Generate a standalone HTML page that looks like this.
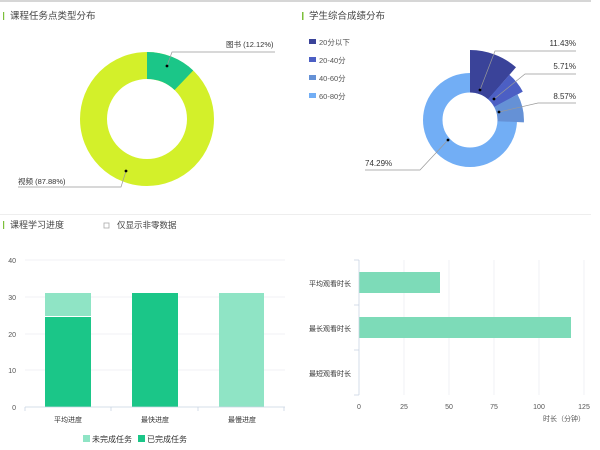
<!DOCTYPE html>
<html><head><meta charset="utf-8"><style>
html,body{margin:0;padding:0;background:#fff;width:600px;height:450px;overflow:hidden}
text{font-family:"Liberation Sans","Noto Sans CJK SC",sans-serif}
</style></head><body>
<svg width="600" height="450" viewBox="0 0 600 450" xmlns="http://www.w3.org/2000/svg">
<rect x="0" y="0" width="591" height="2" fill="#d6d6d6"/>
<rect x="0" y="214" width="591" height="1" fill="#eeeeee"/>
<!-- titles -->
<rect x="3" y="12" width="1.2" height="8" fill="#7cbf3a"/>
<text x="10" y="19" font-size="9.5" fill="#444">课程任务点类型分布</text>
<rect x="302" y="12" width="1.5" height="8" fill="#7cbf3a"/>
<text x="309" y="19" font-size="9.5" fill="#444">学生综合成绩分布</text>
<rect x="3" y="221" width="1.2" height="8" fill="#7cbf3a"/>
<text x="10" y="228" font-size="9" fill="#444">课程学习进度</text>
<rect x="104" y="223" width="5" height="5" fill="#fff" stroke="#aaa" stroke-width="0.8"/>
<text x="117" y="228" font-size="8.5" fill="#444">仅显示非零数据</text>

<!-- donut 1 -->
<circle cx="147" cy="119" r="53.5" fill="none" stroke="#d3f02a" stroke-width="27"/>
<path d="M147 52 A67 67 0 0 1 193.2 70.5 L174.6 90 A40 40 0 0 0 147 79 Z" fill="#1bc688"/>
<polyline points="167,66 172,52 275,52" fill="none" stroke="#999" stroke-width="0.7"/>
<circle cx="167" cy="66" r="1.4" fill="#000"/>
<text x="226" y="47" font-size="7.5" fill="#333">图书 (12.12%)</text>
<polyline points="126,171 121,187 18,187" fill="none" stroke="#999" stroke-width="0.7"/>
<circle cx="126" cy="171" r="1.4" fill="#000"/>
<text x="18" y="184" font-size="7.5" fill="#333">视频 (87.88%)</text>

<!-- donut 2 -->
<circle cx="470" cy="120" r="37.25" fill="none" stroke="#72aef5" stroke-width="19.5"/>
<path d="M470 50 A70 70 0 0 1 516 67.3 L488.1 99.3 A27.5 27.5 0 0 0 470 92.5 Z" fill="#3a4399"/>
<path d="M509.4 74.8 A60 60 0 0 1 522.8 91.6 L494.2 107 A27.5 27.5 0 0 0 488.1 99.3 Z" fill="#4c5fc4"/>
<path d="M517.5 94.4 A54 54 0 0 1 523.9 122.4 L497.5 121.2 A27.5 27.5 0 0 0 494.2 107 Z" fill="#6591d6"/>
<g fill="none" stroke="#999" stroke-width="0.7">
<polyline points="480,90 495,51 576,51"/>
<polyline points="494,99 525,74 576,74"/>
<polyline points="499,112 538,103 576,103"/>
<polyline points="448,140 420,170 365,170"/>
</g>
<g fill="#000"><circle cx="480" cy="90" r="1.4"/><circle cx="494" cy="99" r="1.4"/><circle cx="499" cy="112" r="1.4"/><circle cx="448" cy="140" r="1.4"/></g>
<g font-size="8" fill="#333" text-anchor="end">
<text x="576" y="46">11.43%</text><text x="576" y="69">5.71%</text><text x="576" y="99">8.57%</text>
</g>
<text x="365" y="166" font-size="8" fill="#333">74.29%</text>
<g font-size="7.5" fill="#555">
<rect x="309" y="39" width="7" height="5" fill="#3a4399"/><text x="319" y="45">20分以下</text>
<rect x="309" y="57" width="7" height="5" fill="#4c5fc4"/><text x="319" y="63">20-40分</text>
<rect x="309" y="75" width="7" height="5" fill="#6591d6"/><text x="319" y="81">40-60分</text>
<rect x="309" y="93" width="7" height="5" fill="#72aef5"/><text x="319" y="99">60-80分</text>
</g>

<!-- bar chart -->
<g stroke="#eceef2" stroke-width="0.8">
<line x1="25" y1="260" x2="285" y2="260"/><line x1="25" y1="297" x2="285" y2="297"/>
<line x1="25" y1="334" x2="285" y2="334"/><line x1="25" y1="370" x2="285" y2="370"/>
</g>
<g font-size="7" fill="#555" text-anchor="end">
<text x="16" y="263">40</text><text x="16" y="300">30</text><text x="16" y="337">20</text><text x="16" y="373">10</text><text x="16" y="410">0</text>
</g>
<rect x="45" y="293" width="46" height="23" fill="#8fe4c5"/>
<rect x="45" y="317" width="46" height="90" fill="#1bc688"/>
<rect x="132" y="293" width="46" height="114" fill="#1bc688"/>
<rect x="219" y="293" width="45" height="114" fill="#8fe4c5"/>
<g stroke="#c9d4e3" stroke-width="0.8">
<line x1="25" y1="407" x2="285" y2="407"/>
<line x1="25" y1="407" x2="25" y2="411"/><line x1="111" y1="407" x2="111" y2="411"/>
<line x1="198" y1="407" x2="198" y2="411"/><line x1="284" y1="407" x2="284" y2="411"/>
</g>
<g font-size="7" fill="#333" text-anchor="middle">
<text x="68" y="422">平均进度</text><text x="155" y="422">最快进度</text><text x="242" y="422">最慢进度</text>
</g>
<rect x="83" y="435" width="7" height="7" fill="#8fe4c5"/>
<text x="92" y="442" font-size="8" fill="#333">未完成任务</text>
<rect x="138" y="435" width="7" height="7" fill="#1bc688"/>
<text x="147" y="442" font-size="8" fill="#333">已完成任务</text>

<!-- hbar chart -->
<g stroke="#eceef2" stroke-width="0.8">
<line x1="404" y1="260" x2="404" y2="395"/><line x1="449" y1="260" x2="449" y2="395"/>
<line x1="494" y1="260" x2="494" y2="395"/><line x1="539" y1="260" x2="539" y2="395"/>
<line x1="584" y1="260" x2="584" y2="395"/>
</g>
<rect x="359" y="272" width="81" height="21" fill="#7ddbb8"/>
<rect x="359" y="317" width="212" height="21" fill="#7ddbb8"/>
<g stroke="#c9d4e3" stroke-width="0.8">
<line x1="359" y1="260" x2="359" y2="395"/>
<line x1="354" y1="260" x2="359" y2="260"/><line x1="354" y1="305" x2="359" y2="305"/>
<line x1="354" y1="350" x2="359" y2="350"/><line x1="354" y1="395" x2="359" y2="395"/>
</g>
<g font-size="7" fill="#333" text-anchor="end">
<text x="351" y="286">平均观看时长</text><text x="351" y="331">最长观看时长</text><text x="351" y="376">最短观看时长</text>
</g>
<g font-size="7" fill="#555" text-anchor="middle">
<text x="359" y="409">0</text><text x="404" y="409">25</text><text x="449" y="409">50</text>
<text x="494" y="409">75</text><text x="539" y="409">100</text><text x="584" y="409">125</text>
</g>
<text x="543" y="421" font-size="7" fill="#555">时长（分钟）</text>
</svg>
</body></html>
